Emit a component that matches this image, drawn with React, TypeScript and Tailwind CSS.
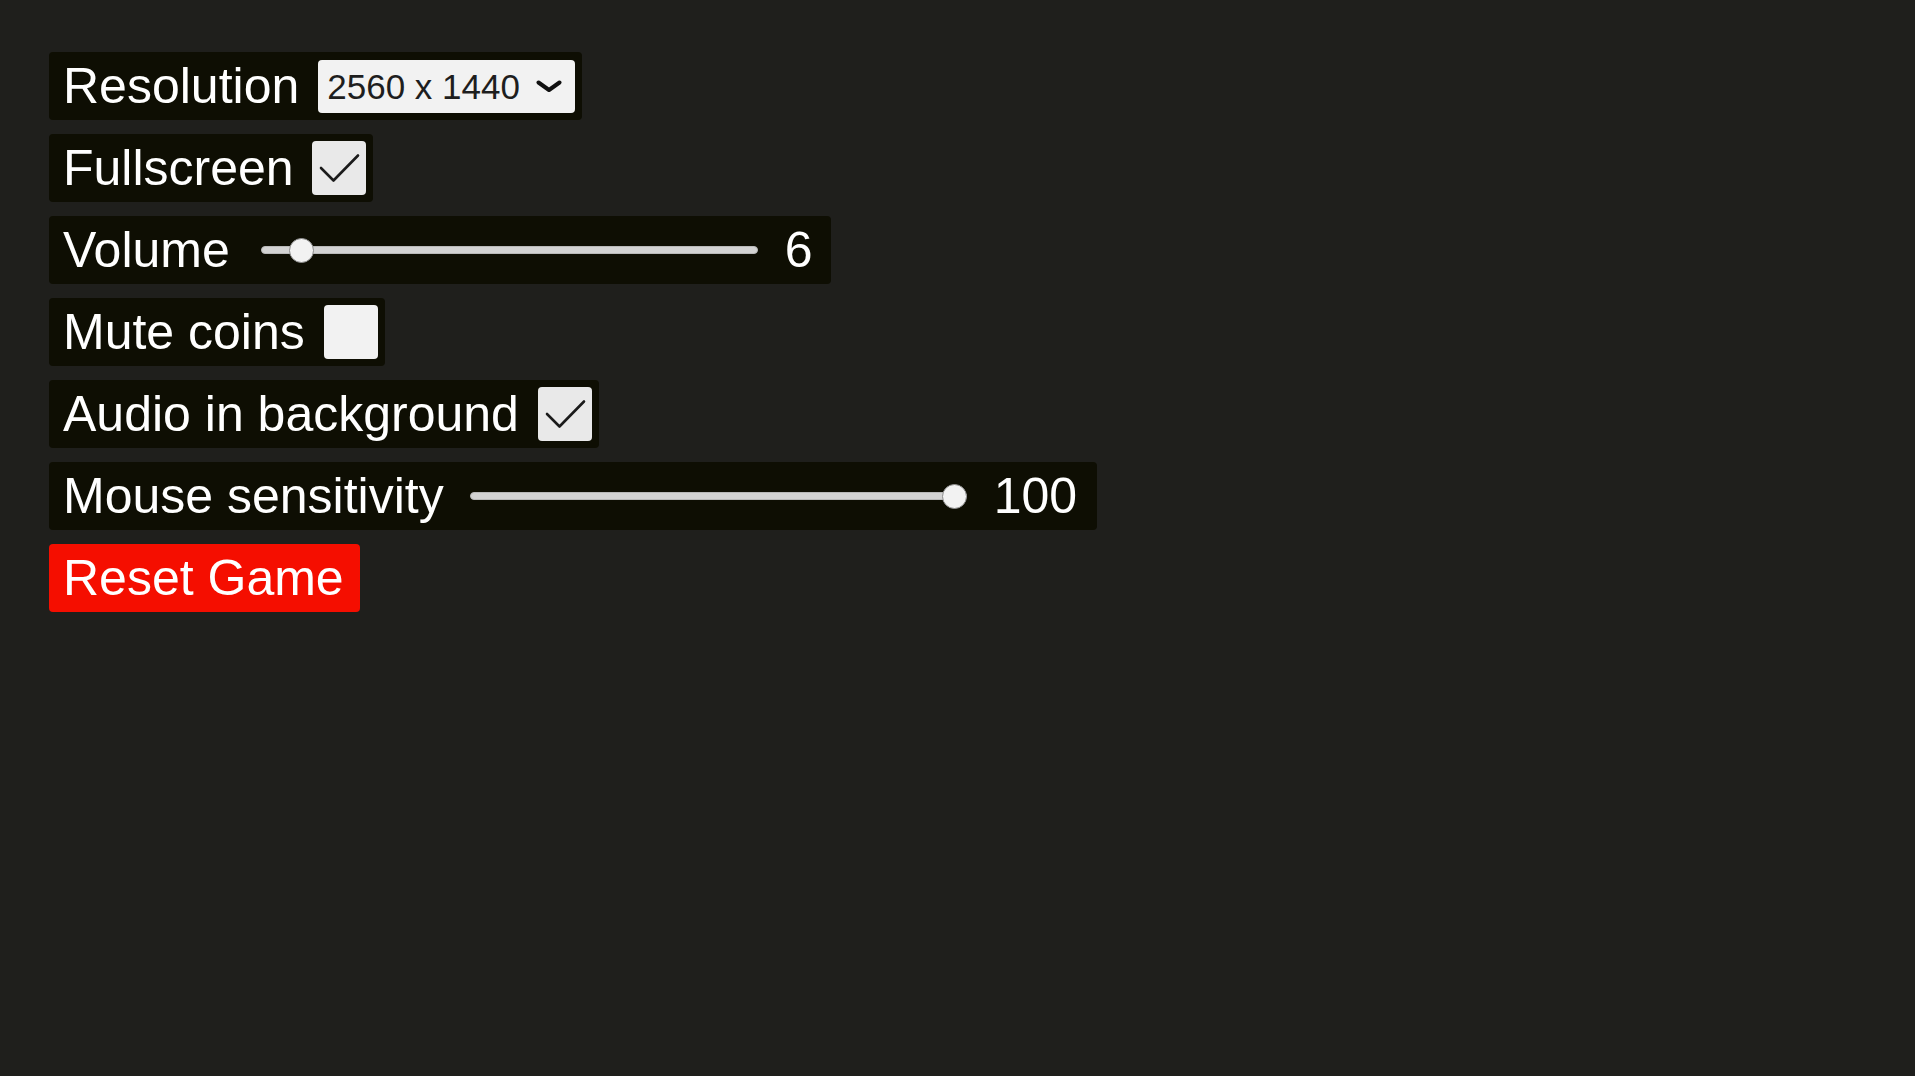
import React from "react";

const PANEL = "h-[68px] rounded-[4px] bg-[#0e0e03] flex items-center";
const LABEL = "text-[50px] leading-none text-white whitespace-nowrap";

function Check({ checked }: { checked: boolean }) {
  return (
    <div
      className={`w-[54px] h-[54px] rounded-[4px] ${checked ? "bg-[#e9e9e9]" : "bg-[#f2f2f2]"} flex items-center justify-center`}
    >
      {checked ? (
        <svg width="54" height="54" viewBox="0 0 54 54">
          <polyline
            points="9,27 21.5,39.5 46,14.5"
            fill="none"
            stroke="#1b1b1b"
            strokeWidth="2.6"
            strokeLinecap="round"
            strokeLinejoin="round"
          />
        </svg>
      ) : null}
    </div>
  );
}

function Slider({ value, max }: { value: number; max: number }) {
  const pct = value / max;
  return (
    <div className="relative w-[497px] h-[25px] flex items-center">
      <div className="w-full h-[8px] rounded-full bg-[#d3d3d3] border border-[#b9b9b9]" />
      <div
        className="absolute top-0 w-[25px] h-[25px] rounded-full bg-[#f2f2f2] border border-[#8c8c8c]"
        style={{ left: `${pct * 472}px` }}
      />
    </div>
  );
}

export default function App() {
  return (
    <div className="min-h-screen w-full bg-[#1f1f1c] pt-[52px] pl-[49px] flex flex-col items-start gap-[14px] [font-family:'Liberation_Sans',Arial,sans-serif]">
      <div className={`${PANEL} pl-[14px] pr-[7px]`}>
        <span className={LABEL}>Resolution</span>
        <div className="ml-[19px] w-[257px] h-[53px] rounded-[4px] bg-[#f2f2f2] flex items-center justify-between pl-[9px] pr-[13px]">
          <span className="text-[35px] leading-none text-[#1e1e1e]">2560 x 1440</span>
          <svg width="26" height="13" viewBox="0 0 26 13">
            <polyline
              points="2.5,2.5 13,10 23.5,2.5"
              fill="none"
              stroke="#111"
              strokeWidth="4"
              strokeLinecap="round"
              strokeLinejoin="round"
            />
          </svg>
        </div>
      </div>

      <div className={`${PANEL} pl-[14px] pr-[7px]`}>
        <span className={LABEL}>Fullscreen</span>
        <div className="ml-[18px]">
          <Check checked={true} />
        </div>
      </div>

      <div className={`${PANEL} pl-[14px] pr-[18px]`}>
        <span className={LABEL}>Volume</span>
        <div className="ml-[31px]">
          <Slider value={6} max={100} />
        </div>
        <span className={`${LABEL} ml-[27px]`}>6</span>
      </div>

      <div className={`${PANEL} pl-[14px] pr-[7px]`}>
        <span className={LABEL}>Mute coins</span>
        <div className="ml-[19px]">
          <Check checked={false} />
        </div>
      </div>

      <div className={`${PANEL} pl-[14px] pr-[7px]`}>
        <span className={LABEL}>Audio in background</span>
        <div className="ml-[19px]">
          <Check checked={true} />
        </div>
      </div>

      <div className={`${PANEL} pl-[14px] pr-[20px]`}>
        <span className={LABEL}>Mouse sensitivity</span>
        <div className="ml-[26px]">
          <Slider value={100} max={100} />
        </div>
        <span className={`${LABEL} ml-[27px]`}>100</span>
      </div>

      <button className="h-[68px] rounded-[4px] bg-[#f50e00] pl-[14px] pr-[16px] flex items-center">
        <span className={LABEL}>Reset Game</span>
      </button>
    </div>
  );
}
